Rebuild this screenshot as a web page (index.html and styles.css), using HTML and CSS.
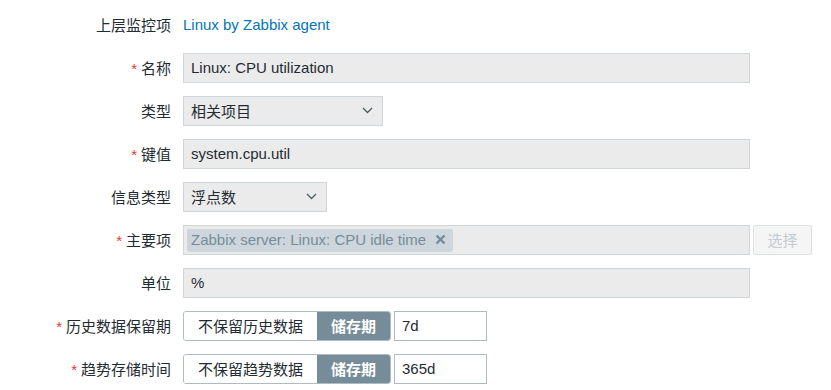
FILE: index.html
```html
<!DOCTYPE html>
<html lang="zh-CN">
<head>
    <meta charset="UTF-8">
    <title>监控项</title>
    <link rel="stylesheet" href="styles.css">
</head>
<body>

<form class="item-form">
    <div class="form-row">
        <label class="form-label">上层监控项</label>
        <div class="form-field"><a href="#" class="link">Linux by Zabbix agent</a></div>
    </div>

    <div class="form-row">
        <label class="form-label required">名称</label>
        <div class="form-field"><input class="text-input wide" type="text" value="Linux: CPU utilization"></div>
    </div>

    <div class="form-row">
        <label class="form-label">类型</label>
        <div class="form-field">
            <div class="select type-select">相关项目
                <svg class="chevron" width="11" height="7" viewBox="0 0 11 7"><path d="M1 1l4.5 4.5L10 1" fill="none" stroke="#4f5b61" stroke-width="1.3"/></svg>
            </div>
        </div>
    </div>

    <div class="form-row">
        <label class="form-label required">键值</label>
        <div class="form-field"><input class="text-input wide" type="text" value="system.cpu.util"></div>
    </div>

    <div class="form-row">
        <label class="form-label">信息类型</label>
        <div class="form-field">
            <div class="select value-select">浮点数
                <svg class="chevron" width="11" height="7" viewBox="0 0 11 7"><path d="M1 1l4.5 4.5L10 1" fill="none" stroke="#4f5b61" stroke-width="1.3"/></svg>
            </div>
        </div>
    </div>

    <div class="form-row">
        <label class="form-label required">主要项</label>
        <div class="form-field">
            <div class="multiselect wide">
                <span class="tag">Zabbix server: Linux: CPU idle time
                    <svg class="tag-remove" width="11" height="11" viewBox="0 0 11 11"><path d="M1.5 1.5l8 8M9.5 1.5l-8 8" stroke="#768d99" stroke-width="2.4"/></svg>
                </span>
            </div>
            <button type="button" class="btn-select" disabled>选择</button>
        </div>
    </div>

    <div class="form-row">
        <label class="form-label">单位</label>
        <div class="form-field"><input class="text-input wide" type="text" value="%"></div>
    </div>

    <div class="form-row">
        <label class="form-label required">历史数据保留期</label>
        <div class="form-field">
            <div class="segmented">
                <span class="segment">不保留历史数据</span>
                <span class="segment active">储存期</span>
            </div>
            <input class="text-input period" type="text" value="7d">
        </div>
    </div>

    <div class="form-row">
        <label class="form-label required">趋势存储时间</label>
        <div class="form-field">
            <div class="segmented">
                <span class="segment">不保留趋势数据</span>
                <span class="segment active">储存期</span>
            </div>
            <input class="text-input period" type="text" value="365d">
        </div>
    </div>
</form>

</body>
</html>
```

FILE: styles.css
```css
body {
    margin: 0;
    background: #fff;
    color: #1f2c33;
    font-family: "Liberation Sans", Arial, "Noto Sans CJK SC", sans-serif;
    font-size: 15px;
}

.item-form {
    padding-top: 10px;
    display: flex;
    flex-direction: column;
    gap: 13px;
}

.form-row {
    display: grid;
    grid-template-columns: 171px 1fr;
    column-gap: 12px;
    align-items: center;
    height: 30px;
}

.form-label {
    text-align: right;
    white-space: nowrap;
    padding-bottom: 2px;
}

.form-label.required::before {
    content: "*";
    color: #e33734;
    margin-right: 4px;
}

.form-field {
    display: flex;
    align-items: center;
    gap: 3px;
}

.link {
    color: #0275b8;
    text-decoration: none;
    padding-bottom: 2px;
}

.text-input {
    box-sizing: border-box;
    height: 30px;
    padding: 0 7px 2px;
    border: 1px solid #cfd5d9;
    background: #ebebeb;
    color: #1f2c33;
    font: inherit;
    outline: none;
}

.wide {
    width: 567px;
}

.select {
    box-sizing: border-box;
    height: 30px;
    padding: 0 7px 2px;
    border: 1px solid #cfd5d9;
    background: #ebebeb;
    display: flex;
    align-items: center;
    justify-content: space-between;
}

.type-select {
    width: 200px;
}

.value-select {
    width: 144px;
}

.chevron {
    margin-right: 2px;
}

.multiselect {
    box-sizing: border-box;
    height: 30px;
    padding: 2px 3px;
    border: 1px solid #cfd5d9;
    background: #ebebeb;
    display: flex;
    align-items: center;
}

.tag {
    box-sizing: border-box;
    height: 23px;
    padding: 0 7px 2px 4px;
    border-radius: 2px;
    background: #cdd6dc;
    color: #768d99;
    display: flex;
    align-items: center;
    gap: 9px;
    white-space: nowrap;
}

.btn-select {
    box-sizing: border-box;
    width: 59px;
    height: 30px;
    padding-bottom: 2px;
    border: 1px solid #dde2e5;
    border-radius: 2px;
    background: #f5f5f5;
    color: #c3cbd0;
    font: inherit;
}

.segmented {
    box-sizing: border-box;
    height: 30px;
    border: 1px solid #aebbc2;
    border-radius: 3px;
    display: flex;
    overflow: hidden;
}

.segment {
    display: flex;
    align-items: center;
    justify-content: center;
    width: 133px;
    padding-bottom: 2px;
    background: #fff;
}

.segment.active {
    width: 73px;
    background: #768d99;
    color: #fff;
    font-weight: bold;
}

.text-input.period {
    width: 93px;
    background: #fff;
    border-color: #aebbc2;
}
```
